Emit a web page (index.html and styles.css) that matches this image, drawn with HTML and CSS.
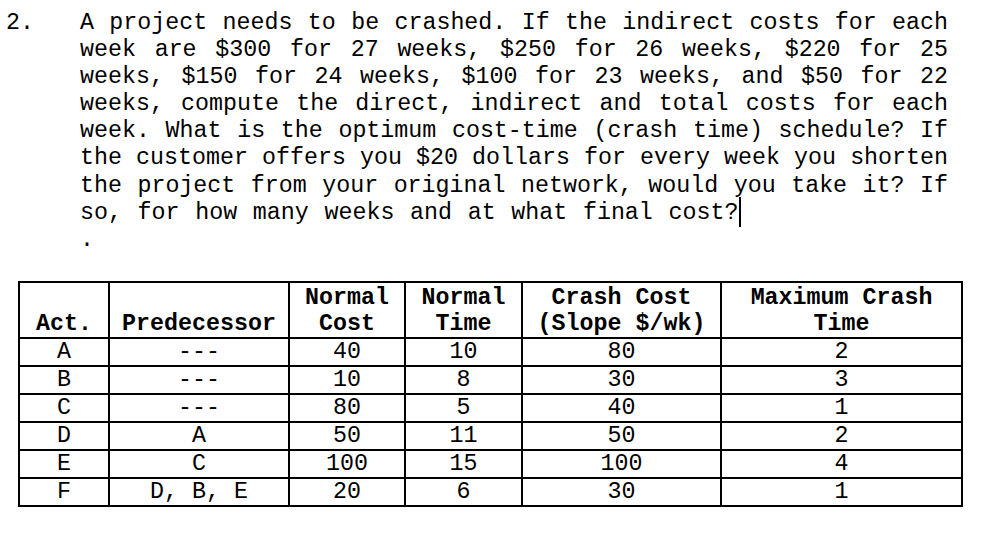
FILE: index.html
```html
<!DOCTYPE html>
<html>
<head>
<meta charset="utf-8">
<link rel="stylesheet" href="styles.css">
</head>
<body>
<div class="problem">
  <div class="num">2.</div>
  <div class="text">
    <p class="para">A project needs to be crashed. If the indirect costs for each week are $300 for 27 weeks, $250 for 26 weeks, $220 for 25 weeks, $150 for 24 weeks, $100 for 23 weeks, and $50 for 22 weeks, compute the direct, indirect and total costs for each week. What is the optimum cost-time (crash time) schedule? If the customer offers you $20 dollars for every week you shorten the project from your original network, would you take it? If <span class="last">so, for how many weeks and at what final cost?</span><span class="caret"></span></p>
    <div class="dot">.</div>
  </div>
</div>
<table class="crash">
  <colgroup>
    <col class="c-act">
    <col class="c-pred">
    <col class="c-ncost">
    <col class="c-ntime">
    <col class="c-crash">
    <col class="c-max">
  </colgroup>
  <thead>
    <tr>
      <th>Act.</th>
      <th>Predecessor</th>
      <th>Normal<br>Cost</th>
      <th>Normal<br>Time</th>
      <th>Crash Cost<br>(Slope $/wk)</th>
      <th>Maximum Crash<br>Time</th>
    </tr>
  </thead>
  <tbody>
    <tr><td>A</td><td>---</td><td>40</td><td>10</td><td>80</td><td>2</td></tr>
    <tr><td>B</td><td>---</td><td>10</td><td>8</td><td>30</td><td>3</td></tr>
    <tr><td>C</td><td>---</td><td>80</td><td>5</td><td>40</td><td>1</td></tr>
    <tr><td>D</td><td>A</td><td>50</td><td>11</td><td>50</td><td>2</td></tr>
    <tr><td>E</td><td>C</td><td>100</td><td>15</td><td>100</td><td>4</td></tr>
    <tr><td>F</td><td>D, B, E</td><td>20</td><td>6</td><td>30</td><td>1</td></tr>
  </tbody>
</table>
</body>
</html>
```
FILE: styles.css
```css
html, body {
  background: #ffffff;
}
body {
  margin: 0;
  padding: 10px 0 0 6px;
  font-family: "Courier New", "Nimbus Mono PS", "FreeMono", "Liberation Mono", monospace;
  font-size: 23.3px;
  color: #000000;
}
.problem {
  display: flex;
  align-items: flex-start;
}
.num {
  width: 74px;
  flex: none;
  line-height: 27.1px;
}
.text {
  width: 868px;
  flex: none;
}
.para {
  margin: 0;
  line-height: 27.1px;
  text-align: justify;
  text-align-last: left;
}
.last {
  word-spacing: 1.7px;
}
.caret {
  position: relative;
  display: inline-block;
  width: 0;
  height: 0;
}
.caret::before {
  content: "";
  position: absolute;
  left: 1px;
  top: -22px;
  width: 2px;
  height: 30px;
  background: #000;
}
.dot {
  line-height: 27.1px;
}
.crash {
  margin: 27px 0 0 12px;
  border-collapse: collapse;
  table-layout: fixed;
  width: 943px;
  font-family: "Courier New", "Nimbus Mono PS", "FreeMono", "Liberation Mono", monospace;
  font-size: 23.3px;
}
.c-act { width: 90px; }
.c-pred { width: 180px; }
.c-ncost { width: 116px; }
.c-ntime { width: 117px; }
.c-crash { width: 199px; }
.c-max { width: 241px; }
.crash th,
.crash td {
  border: 2px solid #000;
  padding: 0;
  text-align: center;
  white-space: nowrap;
}
.crash th {
  font-weight: bold;
  line-height: 26px;
  padding-top: 2px;
  vertical-align: bottom;
}
.crash td {
  font-weight: normal;
  line-height: 26px;
  vertical-align: middle;
}
```
